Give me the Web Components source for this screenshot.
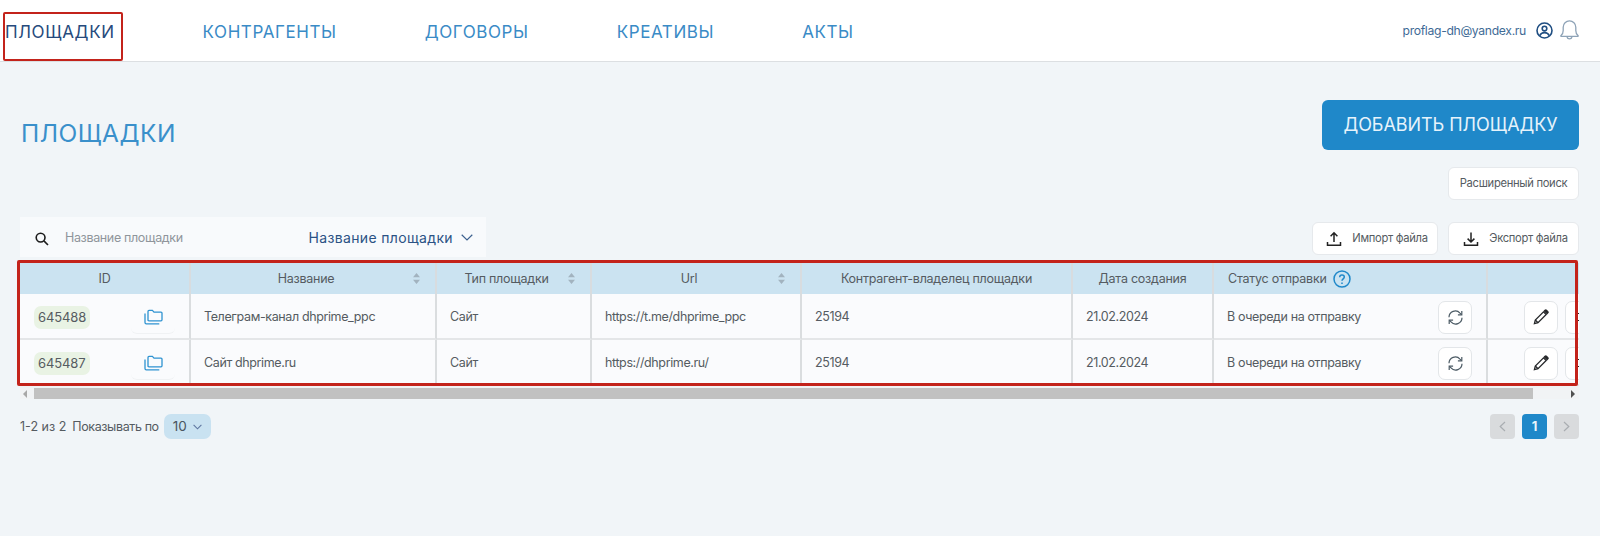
<!doctype html>
<html lang="ru"><head><meta charset="utf-8"><title>Площадки</title>
<style>
html,body{margin:0;padding:0;background:#f1f5f8;height:536px;overflow:hidden}
body{font-family:Inter,"Liberation Sans",sans-serif;color:#555b61;--cols:171px 246px 155px 210px 271px 141px 274px 200px}
</style></head><body>
<app-header>
  <nav-link active>ПЛОЩАДКИ</nav-link><nav-link>КОНТРАГЕНТЫ</nav-link><nav-link>ДОГОВОРЫ</nav-link><nav-link>КРЕАТИВЫ</nav-link><nav-link>АКТЫ</nav-link>
  <span slot="user">proflag-dh@yandex.ru</span>
</app-header>
<app-page>
  <span slot="title">ПЛОЩАДКИ</span>
  <span slot="action">ДОБАВИТЬ ПЛОЩАДКУ</span>
  <tool-button slot="adv">Расширенный поиск</tool-button>
  <search-bar slot="search"></search-bar>
  <tool-button slot="tools" icon="up">Импорт файла</tool-button>
  <tool-button slot="tools" icon="down">Экспорт файла</tool-button>
  <sites-table slot="table">
    <site-row rid="645488" name="Телеграм-канал dhprime_ppc" kind="Сайт" url="https://t.me/dhprime_ppc" owner="25194" created="21.02.2024" status="В очереди на отправку"></site-row>
    <site-row rid="645487" name="Сайт dhprime.ru" kind="Сайт" url="https://dhprime.ru/" owner="25194" created="21.02.2024" status="В очереди на отправку"></site-row>
  </sites-table>
  <pager-bar slot="pager"></pager-bar>
</app-page>
<script>
const el=(name,css,html,extra)=>{customElements.define(name,class extends HTMLElement{
  constructor(){super();const s=this.attachShadow({mode:'open'});s.innerHTML='<style>'+css+'</style>'+(typeof html==='function'?'':html)}
  connectedCallback(){if(typeof html==='function'){const a={};for(const x of this.attributes)a[x.name]=x.value;
    this.shadowRoot.innerHTML='<style>'+css+'</style>'+html(a)}}
})};
const WIDE='Inter,"Liberation Sans",sans-serif';

el('app-header',`
:host{display:flex;align-items:flex-start;height:61px;background:#fff;border-bottom:1px solid #dcdfe2;box-sizing:content-box;position:relative;padding-left:5px;padding-right:21px}
nav{display:flex;gap:88px;flex:1;padding-top:20px}
.user{display:flex;align-items:center;padding-top:20px;font:400 12.2px/20px ${WIDE};letter-spacing:-.33px;color:#3f6b96}
.user svg{display:block}
::slotted(span){position:relative;top:1px}
.u{margin-left:10px}.b{margin-left:7px;margin-top:-2px}
.mark{position:absolute;left:3px;top:12px;width:120px;height:49px;box-sizing:border-box;border:2px solid #c3231b;border-radius:2px;pointer-events:none}
`,`<nav><slot></slot></nav>
<div class="user"><slot name="user"></slot>
<svg class="u" width="17" height="17" viewBox="0 0 17 17" fill="none" stroke="#1f4e82" stroke-width="1.6"><circle cx="8.5" cy="8.5" r="7.5"/><circle cx="8.5" cy="6.6" r="2.3"/><path d="M3.8 13.6c.8-2 2.6-3 4.7-3s3.9 1 4.7 3"/></svg>
<svg class="b" width="19" height="21" viewBox="0 0 19 21" fill="none" stroke="#8ea3b7" stroke-width="1.3"><path d="M1 16.5c1.6-1.2 2.2-2.6 2.2-5V8.2a6.3 6.3 0 0 1 12.6 0v3.3c0 2.4.6 3.8 2.2 5 .4.4.1.8-.4.8H1.4c-.5 0-.8-.4-.4-.8z"/><path d="M7 18c.3 1.2 1.2 1.9 2.5 1.9s2.2-.7 2.5-1.9"/></svg>
</div><div class="mark"></div>`);

el('nav-link',`
:host{display:block;font:400 17px/24px ${WIDE};letter-spacing:.6px;color:#3a8bc6}
:host([active]){color:#264a7c}
`,`<slot></slot>`);

el('app-page',`
:host{display:block;padding:38px 21px 0 20px}
.top{display:flex;justify-content:space-between;align-items:flex-start;height:50px}
.title{font:400 24.5px/50px ${WIDE};color:#3a90cb;padding-left:1px;margin-top:8px;line-height:50px;letter-spacing:.5px}
.cta{height:50px;width:257px;background:#1f88c9;color:#e6f3fb;border-radius:6px;display:flex;align-items:center;justify-content:center;font:400 18px/50px ${WIDE};letter-spacing:-.05px;white-space:nowrap}
.adv{display:flex;justify-content:flex-end;margin-top:17px}
.bar{display:flex;justify-content:space-between;align-items:flex-end;margin-top:17px;height:40px}
.tools{display:flex;gap:10px;margin-bottom:2px}
.pg{margin-top:15px}
.tb{margin-top:6px}
`,`<div class="top"><div class="title"><slot name="title"></slot></div><div class="cta"><slot name="action"></slot></div></div>
<div class="adv"><slot name="adv"></slot></div>
<div class="bar"><slot name="search"></slot><div class="tools"><slot name="tools"></slot></div></div>
<div class="tb"><slot name="table"></slot></div>
<div class="pg"><slot name="pager"></slot></div>`);

const ICON={
 up:`<svg width="16" height="16" viewBox="0 0 16 16" fill="none" stroke="#222" stroke-width="1.5"><path d="M8 11V2M4.6 5.2 8 1.8l3.4 3.4" /><path d="M1.5 11v3.2h13V11"/></svg>`,
 down:`<svg width="16" height="16" viewBox="0 0 16 16" fill="none" stroke="#222" stroke-width="1.5"><path d="M8 1.5v9.5M4.6 7.6 8 11l3.4-3.4"/><path d="M1.5 11v3.2h13V11"/></svg>`};
el('tool-button',`
:host{display:inline-flex;align-items:center;justify-content:center;gap:10px;height:33px;box-sizing:border-box;background:#fff;border:1px solid #e6e9ec;border-radius:6px;font:400 11.2px/1 Inter,sans-serif;letter-spacing:-.3px;color:#555b61;padding:1px 6px 0;white-space:nowrap}
:host([icon]){padding-left:10px}
:host([icon="up"]){width:126px}
:host([icon="down"]),:host(:not([icon])){width:131px}
svg{flex:none;margin-top:-1px}
`,a=>(a.icon?ICON[a.icon]:'')+`<slot></slot>`);

el('search-bar',`
:host{display:flex;align-items:center;width:466px;height:40px;box-sizing:border-box;background:#f8fafc;padding:3px 13px 0 15px}
svg{flex:none}
.ph{margin-left:16px;flex:1;font:400 12.5px/1 Inter,sans-serif;letter-spacing:-.35px;color:#8f959b;white-space:nowrap}
.dd{display:flex;align-items:center;gap:8px;font:400 14px/1 ${WIDE};letter-spacing:.35px;color:#2b5284;white-space:nowrap;margin-top:-2px}
`,`<svg width="14" height="14" viewBox="0 0 14 14" fill="none" stroke="#1c1c1c" stroke-width="1.6"><circle cx="5.6" cy="5.6" r="4.4"/><path d="M8.9 8.9 13 13"/></svg>
<span class="ph">Название площадки</span>
<span class="dd">Название площадки <svg width="12" height="7" viewBox="0 0 12 7" fill="none" stroke="#3d618f" stroke-width="1.2"><path d="M.7.8 6 6l5.3-5.2"/></svg></span>`);

const SORT=`<svg class="sort" width="9" height="11" viewBox="0 0 9 11" fill="#a2b3bf"><path d="M4.5 0 8 4.3H1zM4.5 11 1 6.7h7z"/></svg>`;
el('head-cell',`
:host{display:flex;align-items:center;justify-content:center;position:relative;box-sizing:border-box;background:#cbe3f1;border-right:2px solid #d8dcdf;font:400 12.5px/1 Inter,sans-serif;letter-spacing:-.25px;color:#555b61;white-space:nowrap;height:31px;padding-top:1px}
:host([sort]){padding-right:14px}
:host([left]){justify-content:flex-start;padding-left:14px;gap:6px}
.sort{position:absolute;right:14px;top:10px}
.q{flex:none;margin-top:-1px}
`,a=>`<slot></slot>`+(a.sort!==undefined?SORT:'')+(a.help!==undefined?`<svg class="q" width="18" height="18" viewBox="0 0 18 18" fill="none" stroke="#1f88c9" stroke-width="1.5"><circle cx="9" cy="9" r="8"/><path d="M6.7 7.2c0-1.3 1-2.2 2.3-2.2s2.3.9 2.3 2.1c0 1.8-2.3 1.9-2.3 3.7"/><path d="M9 12.4v1.5"/></svg>`:''));

el('sites-table',`
:host{display:block;position:relative;width:1559px}
.clip{overflow:hidden;width:1559px}
.head{display:grid;grid-template-columns:var(--cols);width:1668px}
.track{height:13px;background:#f1f3f5;position:relative;display:flex;align-items:flex-end}
.thumb{position:absolute;left:14px;width:1499px;top:2px;height:11px;background:#c1c1c1}
.a{position:absolute;top:4px;width:0;height:0;border:4px solid transparent}
.l{left:3px;border-right-color:#a8a8a8;border-left:0}
.r{right:4px;border-left-color:#505050;border-right:0}
.mark{position:absolute;left:-3px;top:-3px;width:1561px;height:126px;box-sizing:border-box;border:3px solid #c3231b;border-radius:2px;pointer-events:none}
`,`<div class="clip"><div class="head">
<head-cell>ID</head-cell><head-cell sort>Название</head-cell><head-cell sort>Тип площадки</head-cell><head-cell sort>Url</head-cell><head-cell>Контрагент-владелец площадки</head-cell><head-cell>Дата создания</head-cell><head-cell left help>Статус отправки</head-cell><head-cell></head-cell>
</div><slot></slot></div>
<div class="track"><i class="a l"></i><div class="thumb"></div><i class="a r"></i></div>
<div class="mark"></div>`);

el('data-cell',`
:host{display:flex;align-items:center;justify-content:space-between;box-sizing:border-box;height:46px;padding:2px 14px 0 13px;background:#fafbfd;border-right:2px solid #dadddf;border-bottom:2px solid #e4e6e8;font:400 12.5px/1 Inter,sans-serif;letter-spacing:-.38px;color:#555b61;white-space:nowrap}
`,`<slot></slot>`);

el('icon-button',`
:host{display:flex;align-items:center;justify-content:center;flex:none;box-sizing:border-box;width:34px;height:33px;background:#fff;border:1px solid #e3e6e9;border-radius:7px}
`,`<slot></slot>`);

el('site-row',`
:host{display:grid;grid-template-columns:var(--cols);width:1668px}
.id{font-size:13px;background:#e9f3e4;border-radius:7px;height:23px;line-height:23px;padding:0 4px;color:#555b61;letter-spacing:-.1px;margin-left:1px}
.fold{width:44px;height:33px;display:flex;align-items:center;justify-content:center;border-bottom:1px solid #f0f2f4;border-radius:6px;box-sizing:border-box}
`,a=>`<data-cell><span class="id">${a.rid}</span><span class="fold"><svg width="19" height="16" viewBox="0 0 19 16" fill="none" stroke="#2f93d1" stroke-width="1.3"><path d="M4 11.8V2.4c0-.6.4-1 1-1h3.4l1.6 1.7h7c.6 0 1 .4 1 1v6.7c0 .6-.4 1-1 1H5c-.6 0-1-.4-1-1z"/><path d="M1 4.6v9c0 .8.5 1.3 1.3 1.3h13"/></svg></span></data-cell>
<data-cell>${a.name}</data-cell><data-cell>${a.kind}</data-cell><data-cell>${a.url}</data-cell><data-cell>${a.owner}</data-cell><data-cell>${a.created}</data-cell>
<data-cell>${a.status}<icon-button><svg width="17" height="17" viewBox="0 0 17 17" fill="none" stroke="#4b5a64" stroke-width="1.2"><path d="M2 8.2a6.3 6.3 0 0 1 11-4.1l1.6 1.6"/><path d="M14.8 2v3.9h-3.9"/><path d="M15 8.8a6.3 6.3 0 0 1-11 4.1l-1.6-1.6"/><path d="M2.2 15v-3.9h3.9"/></svg></icon-button></data-cell>
<data-cell style="padding:2px 0 0 36px;justify-content:flex-start;gap:7px"><icon-button><svg width="16" height="16" viewBox="0 0 16 16" fill="none" stroke="#26282a" stroke-width="1.3"><path d="M1.4 14.6l.9-3.6 8.2-8.2 2.7 2.7-8.2 8.2z"/><path d="M2.3 11l2.7 2.7"/><path d="M11.4 1.9l.7-.7c.4-.4.9-.4 1.3 0l1.4 1.4c.4.4.4.9 0 1.3l-.7.7z" fill="#26282a"/></svg></icon-button><icon-button style="justify-content:flex-start;padding-left:11px"><svg width="16" height="16" viewBox="0 0 16 16" stroke="#222" fill="none" stroke-width="1.2"><path d="M0 4.5h12M0 11.5h12" /></svg></icon-button></data-cell>`);

el('pager-bar',`
:host{display:flex;align-items:center;height:25px;font:400 12.5px/1 Inter,sans-serif;color:#555b61}
.t{padding-top:2px}
.n{margin-left:6px;letter-spacing:-.38px}
.sel{display:flex;align-items:center;gap:6px;width:47px;height:25px;box-sizing:border-box;padding:1px 0 0 9px;margin-left:5px;background:#c9e2f1;border-radius:7px;font-size:13.5px;color:#4a5560}
.sp{flex:1}
.p{width:25px;height:25px;border-radius:4px;background:#d9dbdd;display:flex;align-items:center;justify-content:center;margin-left:7px}
.on{background:#1f88c9;color:#e8f4fb;font-weight:700;font-size:13px}
`,`<span class="t">1-2 из 2</span><span class="n t">Показывать по</span>
<span class="sel">10 <svg width="9" height="6" viewBox="0 0 9 6" fill="none" stroke="#5e76a0" stroke-width="1.1"><path d="M.6.8 4.5 4.8 8.4.8"/></svg></span><span class="sp"></span>
<span class="p"><svg width="7" height="11" viewBox="0 0 7 11" fill="none" stroke="#a9adb1" stroke-width="1.2"><path d="M6 1 1.2 5.5 6 10"/></svg></span><span class="p on">1</span><span class="p"><svg width="7" height="11" viewBox="0 0 7 11" fill="none" stroke="#a9adb1" stroke-width="1.2"><path d="M1 1l4.8 4.5L1 10"/></svg></span>`);
</script>
</body></html>
